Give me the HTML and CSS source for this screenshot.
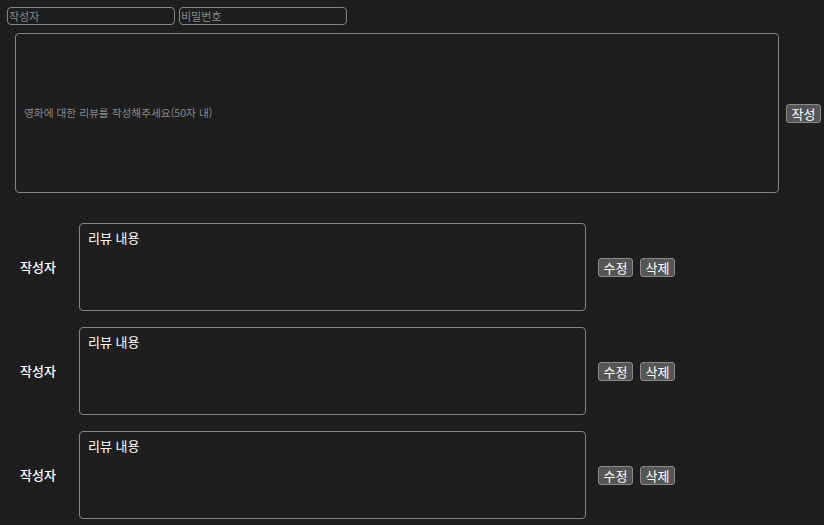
FILE: index.html
```html
<!DOCTYPE html>
<html lang="ko">
<head>
<meta charset="utf-8">
<title>리뷰</title>
<link rel="stylesheet" href="styles.css">
</head>
<body>
  <div class="top">
    <input class="field" type="text" placeholder="작성자">
    <input class="field" type="password" placeholder="비밀번호">
  </div>
  <div class="write">
    <input class="big" type="text" placeholder="영화에 대한 리뷰를 작성해주세요(50자 내)">
    <button class="btn">작성</button>
  </div>
  <div class="list">
    <div class="row">
      <div class="author">작성자</div>
      <div class="content">리뷰 내용</div>
      <div class="actions"><button class="btn">수정</button><button class="btn">삭제</button></div>
    </div>
    <div class="row">
      <div class="author">작성자</div>
      <div class="content">리뷰 내용</div>
      <div class="actions"><button class="btn">수정</button><button class="btn">삭제</button></div>
    </div>
    <div class="row">
      <div class="author">작성자</div>
      <div class="content">리뷰 내용</div>
      <div class="actions"><button class="btn">수정</button><button class="btn">삭제</button></div>
    </div>
  </div>
</body>
</html>
```
FILE: styles.css
```css
* { box-sizing: border-box; }
html, body { background: #1e1e1e; }
body {
  margin: 0;
  padding: 7px 0 0 7px;
  color: #fff;
  font-family: "Noto Sans CJK KR", "Noto Sans", sans-serif;
  font-size: 13px;
}
input, button { font-family: inherit; }
.top { display: flex; gap: 4px; }
.field {
  width: 168px;
  height: 18px;
  background: #1e1e1e;
  border: 1px solid #858585;
  border-radius: 4px;
  color: #fff;
  font-size: 11px;
  padding: 0 1px;
  outline: none;
}
.field::placeholder, .big::placeholder { color: #8a8a8a; }
.write {
  display: flex;
  align-items: center;
  gap: 7px;
  margin: 8px 0 0 8px;
}
.big {
  width: 764px;
  height: 160px;
  background: #1e1e1e;
  border: 1px solid #858585;
  border-radius: 4px;
  color: #fff;
  font-size: 10.7px;
  padding: 0 0 2px 8px;
  outline: none;
}
.btn {
  height: 19px;
  width: 35px;
  padding: 0;
  background: #555;
  border: 1px solid #8a8a8a;
  border-radius: 3px;
  color: #fff;
  font-size: 13px;
  line-height: 17px;
}
.list {
  display: flex;
  flex-direction: column;
  gap: 16px;
  margin-top: 30px;
}
.row { display: flex; align-items: center; }
.author {
  width: 72px;
  padding-left: 13px;
  font-weight: 500;
  padding-bottom: 1px;
}
.content {
  width: 507px;
  height: 88px;
  border: 1px solid #858585;
  border-radius: 4px;
  padding: 5px 8px;
  line-height: 17px;
  align-self: flex-start;
}
.actions {
  display: flex;
  gap: 7px;
  margin-left: 12px;
}
```
